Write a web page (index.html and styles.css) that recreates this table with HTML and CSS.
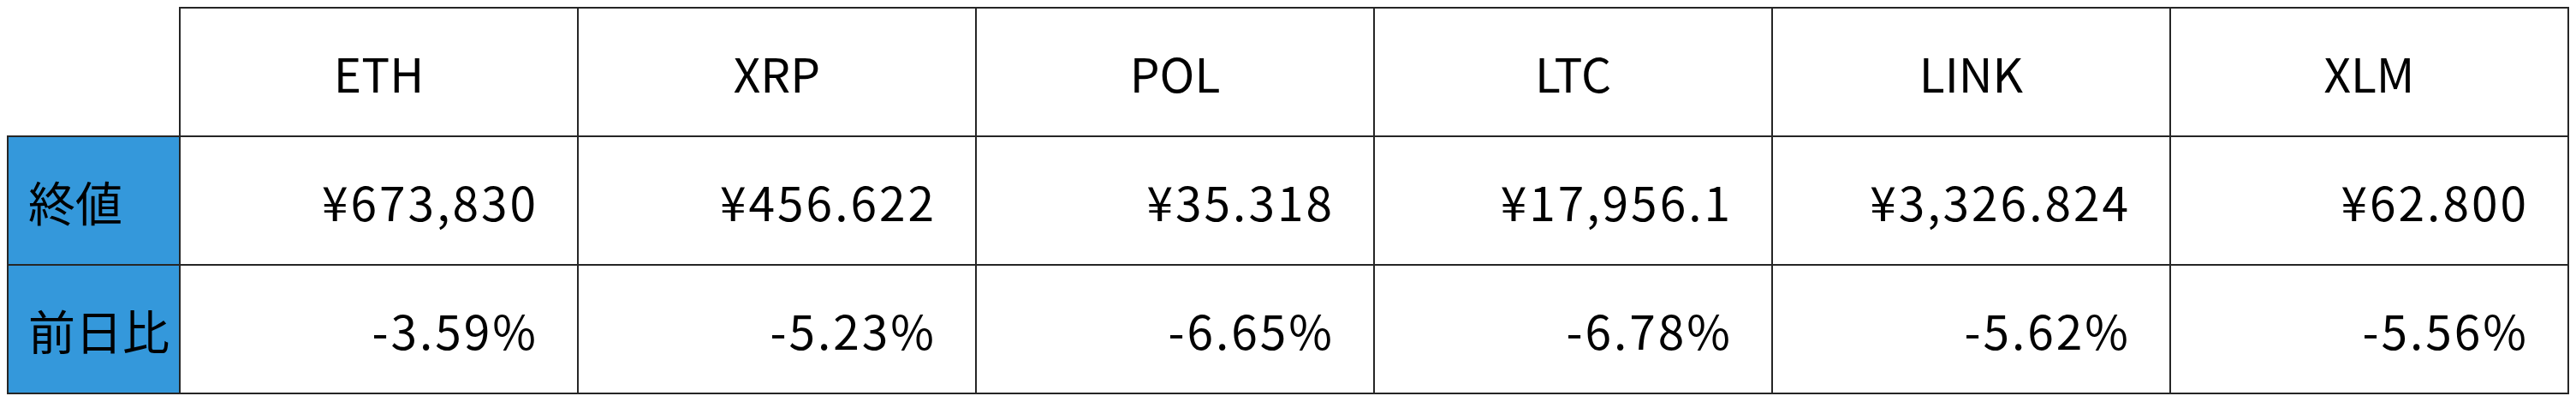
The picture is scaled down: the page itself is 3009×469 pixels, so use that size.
FILE: index.html
```html
<!DOCTYPE html>
<html lang="ja">
<head>
<meta charset="utf-8">
<title>暗号資産 終値</title>
<link rel="stylesheet" href="styles.css">
</head>
<body>
<table class="rates">
  <colgroup>
    <col class="col-label">
    <col class="col-coin"><col class="col-coin"><col class="col-coin">
    <col class="col-coin"><col class="col-coin"><col class="col-coin">
  </colgroup>
  <thead>
    <tr>
      <th class="corner"></th>
      <th>ETH</th>
      <th>XRP</th>
      <th>POL</th>
      <th>LTC</th>
      <th>LINK</th>
      <th>XLM</th>
    </tr>
  </thead>
  <tbody>
    <tr>
      <th class="label">終値</th>
      <td>¥673,830</td>
      <td>¥456.622</td>
      <td>¥35.318</td>
      <td>¥17,956.1</td>
      <td>¥3,326.824</td>
      <td>¥62.800</td>
    </tr>
    <tr>
      <th class="label">前日比</th>
      <td>-3.59%</td>
      <td>-5.23%</td>
      <td>-6.65%</td>
      <td>-6.78%</td>
      <td>-5.62%</td>
      <td>-5.56%</td>
    </tr>
  </tbody>
</table>
</body>
</html>
```
FILE: styles.css
```css
html, body {
  margin: 0;
  background: #ffffff;
}

body {
  padding: 8px;
  font-family: "Noto Sans CJK JP", "Noto Sans", sans-serif;
  color: #000000;
}

.rates {
  border-collapse: collapse;
  table-layout: fixed;
  width: 2993px;
}

.col-label {
  width: 201px;
}

.rates th,
.rates td {
  height: 148px;
  padding: 0;
  border: 2px solid #262626;
  font-size: 55px;
  font-weight: 400;
  line-height: 1;
  vertical-align: middle;
}

.rates thead th {
  text-align: center;
}

.rates .corner {
  border-top: none;
  border-left: none;
}

.rates .label {
  background: #3498db;
  text-align: left;
  padding-left: 23px;
}

.rates td {
  text-align: right;
  letter-spacing: 3px;
  padding-right: 45px;
}
```
